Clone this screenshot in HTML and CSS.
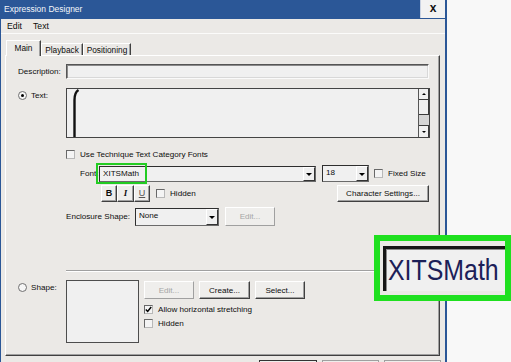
FILE: index.html
```html
<!DOCTYPE html>
<html lang="en">
<head>
    <meta charset="UTF-8">
    <title>Expression Designer</title>
    <link rel="stylesheet" href="styles.css">
</head>
<body>
    <div class="screen">
        <div class="window">
            <div class="titlebar">
                <span class="title">Expression Designer</span>
                <span class="close">x</span>
            </div>
            <div class="menubar">
                <span>Edit</span>
                <span>Text</span>
            </div>
            <div class="tabs">
                <span class="tab tab-main active">Main</span>
                <span class="tab tab-playback">Playback</span>
                <span class="tab tab-position">Positioning</span>
            </div>

            <div class="panel">
                <div class="row row-desc">
                    <span class="lbl">Description:</span>
                    <div class="field"></div>
                </div>

                <div class="row row-text">
                    <div class="lbl radio-lbl"><span class="radio on"></span>Text:</div>
                    <div class="textarea">
                        <div class="text-body">
                            <svg class="bracket" width="14" height="48" viewBox="0 0 14 48">
                                <path d="M11.5 1 Q7.5 3.5 7.5 11 V48" fill="none" stroke="#111" stroke-width="2.4"/>
                            </svg>
                        </div>
                        <div class="scrollbar">
                            <span class="sb-btn sb-up"></span>
                            <span class="sb-thumb"></span>
                            <span class="sb-track"></span>
                            <span class="sb-btn sb-down"></span>
                        </div>
                    </div>
                </div>

                <div class="row row-check">
                    <span class="check"></span>
                    <span class="check-lbl">Use Technique Text Category Fonts</span>
                </div>

                <div class="row row-font">
                    <span class="font-lbl">Font:</span>
                    <div class="combo font-combo">
                        <span class="combo-text">XITSMath</span>
                        <span class="drop"></span>
                    </div>
                    <div class="combo size-combo">
                        <span class="combo-text">18</span>
                        <span class="drop"></span>
                    </div>
                    <span class="check fixed-check"></span>
                    <span class="check-lbl">Fixed Size</span>
                    <span class="highlight"></span>
                </div>

                <div class="row row-style">
                    <span class="btn fmt fmt-b">B</span>
                    <span class="btn fmt fmt-i">I</span>
                    <span class="btn fmt fmt-u">U</span>
                    <span class="check hidden-check"></span>
                    <span class="check-lbl">Hidden</span>
                    <span class="btn char-btn">Character Settings...</span>
                </div>

                <div class="row row-enc">
                    <span class="enc-lbl">Enclosure Shape:</span>
                    <div class="combo enc-combo">
                        <span class="combo-text">None</span>
                        <span class="drop"></span>
                    </div>
                    <span class="btn disabled enc-edit">Edit...</span>
                </div>

                <div class="separator"></div>

                <div class="row row-shape">
                    <div class="lbl radio-lbl"><span class="radio"></span>Shape:</div>
                    <div class="preview"></div>
                    <div class="shape-controls">
                        <div class="shape-buttons">
                            <span class="btn disabled shape-btn">Edit...</span>
                            <span class="btn shape-btn create-btn">Create...</span>
                            <span class="btn shape-btn">Select...</span>
                        </div>
                        <div class="opt opt-first">
                            <span class="check checked">
                                <svg width="7" height="7" viewBox="0 0 7 7"><path d="M0.8 3.4 L2.7 5.4 L6.2 1" fill="none" stroke="#000" stroke-width="1.5"/></svg>
                            </span>
                            <span class="check-lbl">Allow horizontal stretching</span>
                        </div>
                        <div class="opt">
                            <span class="check"></span>
                            <span class="check-lbl">Hidden</span>
                        </div>
                    </div>
                </div>
            </div>

            <div class="dialog-buttons">
                <span class="dbtn default"></span>
                <span class="dbtn"></span>
                <span class="dbtn"></span>
            </div>
        </div>

        <!-- zoomed callout of the font field -->
        <div class="callout">
            <div class="callout-box">
                <span class="callout-text">XITSMath</span>
            </div>
        </div>
    </div>
</body>
</html>
```

FILE: styles.css
```css
* {
    box-sizing: border-box;
}
body {
    margin: 0;
    background: #f8f8f8;
    font-family: "Liberation Sans", Arial, sans-serif;
    font-size: 8.1px;
    color: #0d0d0d;
}
.screen {
    position: relative;
    width: 511px;
    height: 362px;
    overflow: hidden;
}
.window {
    width: 447px;
    height: 362px;
    background: #ebe9e6;
    border-left: 1px solid #2b5797;
    border-right: 2px solid #2b5797;
    overflow: hidden;
}
.titlebar {
    height: 19px;
    background: #2b5797;
    display: flex;
    justify-content: space-between;
}
.title {
    color: #f4f6fa;
    font-size: 8.5px;
    padding-left: 3px;
    line-height: 19px;
}
.close {
    width: 25px;
    height: 18px;
    background: #f2f2f2;
    border-left: 1px solid #c9d2e2;
    color: #111;
    font-size: 12px;
    font-weight: bold;
    line-height: 16px;
    text-align: center;
}
.menubar {
    height: 15px;
    display: flex;
    align-items: center;
    gap: 11px;
    padding-left: 6px;
    font-size: 8.7px;
    border-bottom: 1px solid #fbfbfa;
}

/* tabs */
.tabs {
    display: flex;
    align-items: flex-end;
    height: 15px;
    margin-top: 6px;
    padding-left: 5px;
    position: relative;
    z-index: 1;
    font-size: 8.3px;
}
.tab {
    height: 12px;
    display: flex;
    align-items: center;
    justify-content: center;
    border-style: solid;
    border-width: 1px 1px 0 1px;
    border-color: #fff #404040 transparent #fff;
    box-shadow: inset -1px 0 #a0a0a0;
}
.tab.active {
    height: 16px;
    margin-bottom: -1px;
    background: #ebe9e6;
    padding-bottom: 2px;
}
.tab-main { width: 35px; }
.tab-playback { width: 42px; }
.tab-position { width: 48px; }

.panel {
    margin-left: 4px;
    width: 435px;
    height: 301px;
    border-style: solid;
    border-width: 1px;
    border-color: #fff #404040 #404040 #fff;
    box-shadow: inset -1px -1px #a0a0a0;
    padding: 8px 9px 0 12px;
}
.row {
    display: flex;
    align-items: center;
}
.lbl {
    width: 48px;
    flex: none;
}
.radio-lbl {
    display: flex;
    align-items: center;
    gap: 4px;
    height: 10px;
}
.radio {
    position: relative;
    width: 9px;
    height: 9px;
    border-radius: 50%;
    border: 1px solid #707070;
    background: #f6f6f6;
}
.radio.on::after {
    content: "";
    position: absolute;
    left: 2px;
    top: 2px;
    width: 3px;
    height: 3px;
    border-radius: 50%;
    background: #000;
}
.check {
    width: 9px;
    height: 9px;
    flex: none;
    border: 1px solid;
    border-color: #686868 #b8b8b8 #b8b8b8 #686868;
    background: #f4f4f4;
    display: flex;
    align-items: center;
    justify-content: center;
}
.check-lbl {
    margin-left: 5px;
    white-space: nowrap;
}

/* description */
.row-desc {
    height: 15px;
}
.field {
    width: 363px;
    height: 15px;
    background: #f0f0f0;
    border: 1px solid;
    border-color: #555 #fafafa #fafafa #555;
    box-shadow: inset 1px 1px #8a8a8a, inset -1px -1px #d8d8d8;
}

/* text area */
.row-text {
    margin-top: 9px;
    height: 50px;
    align-items: flex-start;
}
.row-text .radio-lbl {
    margin-top: 2px;
}
.textarea {
    width: 364px;
    height: 50px;
    display: flex;
    border: 1px solid #444;
    background: #f0f0f0;
}
.text-body {
    flex: 1;
}
.bracket {
    display: block;
}
.scrollbar {
    width: 11px;
    display: flex;
    flex-direction: column;
    border-left: 1px solid #555;
}
.sb-btn {
    display: flex;
    align-items: center;
    justify-content: center;
    background: #f0f0f0;
    border-bottom: 1px solid #3a3a3a;
    border-right: 1px solid #3a3a3a;
}
.sb-up {
    height: 11px;
}
.sb-down {
    height: 12px;
    border-top: 1px solid #3a3a3a;
    border-bottom: none;
}
.sb-up::after,
.sb-down::after {
    content: "";
    border-left: 2px solid transparent;
    border-right: 2px solid transparent;
}
.sb-up::after { border-bottom: 2px solid #000; }
.sb-down::after { border-top: 2px solid #000; }
.sb-thumb {
    height: 15px;
    background: #f0f0f0;
    border-right: 1px solid #3a3a3a;
    border-bottom: 1px solid #3a3a3a;
}
.sb-track {
    flex: 1;
    background: #d5d5d5;
}

/* check rows */
.row-check {
    margin-top: 11px;
    height: 10px;
    padding-left: 48px;
}

/* font row */
.row-font {
    position: relative;
    margin-top: 4px;
    height: 21px;
    padding-left: 62px;
}
.font-lbl {
    width: 19px;
}
.combo {
    display: flex;
    height: 16px;
    background: #f0f0f0;
    border: 1px solid;
    border-color: #2e2e2e #6a6a6a #6a6a6a #2e2e2e;
}
.combo-text {
    flex: 1;
    padding-left: 3px;
    line-height: 14px;
}
.drop {
    width: 12px;
    display: flex;
    align-items: center;
    justify-content: center;
    background: #efefef;
    border: 1px solid;
    border-color: #fff #333 #333 #fff;
}
.drop::after {
    content: "";
    border-left: 3px solid transparent;
    border-right: 3px solid transparent;
    border-top: 3px solid #000;
    margin-top: 1px;
}
.font-combo {
    width: 217px;
}
.size-combo {
    width: 47px;
    height: 17px;
    margin-left: 6px;
}
.fixed-check {
    margin-left: 5px;
}
.highlight {
    position: absolute;
    left: 78px;
    top: 0;
    width: 51px;
    height: 21px;
    border: 2px solid #22cc22;
}

/* buttons */
.btn {
    display: flex;
    align-items: center;
    justify-content: center;
    background: #efeeec;
    border: 1px solid;
    border-color: #fff #404040 #404040 #fff;
    box-shadow: inset -1px -1px #a0a0a0;
    white-space: nowrap;
}
.btn.disabled {
    color: #a6a6a6;
    border-color: #fff #a0a0a0 #a0a0a0 #fff;
    box-shadow: none;
}

/* style row */
.row-style {
    height: 18px;
    padding-left: 83px;
}
.fmt {
    width: 16px;
    height: 17px;
    font-family: "Liberation Serif", serif;
    font-size: 9px;
}
.fmt-b { font-family: "Liberation Sans", sans-serif; font-weight: bold; }
.fmt-i { font-style: italic; font-weight: bold; width: 17px; }
.fmt-u { text-decoration: underline; color: #555; font-family: "Liberation Sans", sans-serif; }
.hidden-check {
    margin-left: 6px;
}
.char-btn {
    margin-left: auto;
    margin-right: 1px;
    align-self: flex-end;
    width: 92px;
    height: 17px;
}

/* enclosure row */
.row-enc {
    margin-top: 5px;
    height: 19px;
    padding-left: 48px;
}
.enc-lbl {
    width: 69px;
}
.enc-combo {
    width: 84px;
    height: 18px;
}
.enc-edit {
    margin-left: 6px;
    width: 50px;
    height: 19px;
}

.separator {
    margin: 44px 0 0 48px;
    width: 364px;
    border-top: 1px solid #a0a0a0;
    border-bottom: 1px solid #fff;
}

/* shape row */
.row-shape {
    margin-top: 8px;
    height: 63px;
    align-items: flex-start;
}
.row-shape .radio-lbl {
    margin-top: 2px;
}
.preview {
    width: 73px;
    height: 63px;
    border: 1px solid #4d4d4d;
    background: #f0f0f0;
}
.shape-controls {
    margin-left: 5px;
}
.shape-buttons {
    display: flex;
    gap: 5px;
    margin-top: 1px;
}
.shape-btn {
    width: 50px;
    height: 18px;
}
.create-btn {
    width: 51px;
}
.opt {
    display: flex;
    align-items: center;
    height: 10px;
    margin-top: 4px;
}
.opt-first {
    margin-top: 5px;
}

.dialog-buttons {
    display: flex;
    justify-content: flex-end;
    gap: 5px;
    margin-top: 4px;
    padding-right: 4px;
}
.dbtn {
    width: 57px;
    height: 20px;
    background: #efeeec;
    border: 1px solid;
    border-color: #a0a0a0;
}
.dbtn.default {
    width: 58px;
    border-color: #333;
}

/* zoomed callout */
.callout {
    position: absolute;
    left: 374px;
    top: 235px;
    width: 137px;
    height: 66px;
    border: 6px solid #1fe01f;
    background: #ebe9e6;
}
.callout-box {
    margin: 5px 0 0 3px;
    height: 45px;
    border-top: 3px solid #161616;
    border-left: 3px solid #161616;
    box-shadow: inset 1px 1px #8a8a8a;
    background: #f0f0f0;
    overflow: hidden;
}
.callout-text {
    display: block;
    margin: 6px 0 0 2px;
    font-size: 30px;
    line-height: 30px;
    color: #1c2058;
    transform: scaleX(0.83);
    transform-origin: left;
    white-space: nowrap;
}
```
